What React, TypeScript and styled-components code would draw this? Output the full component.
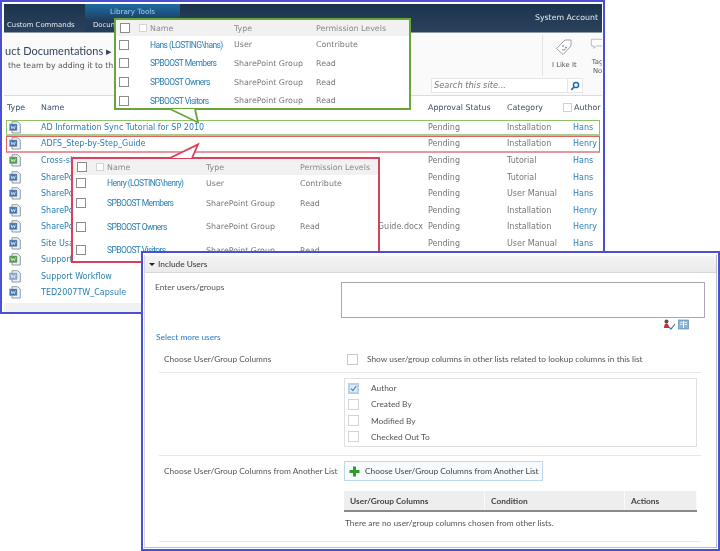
import React from 'react';
import styled, { createGlobalStyle } from 'styled-components';

const GlobalStyle = createGlobalStyle`
	html, body {
		margin: 0;
		padding: 0;
		background: #fff;
	}
`;

const Canvas = styled.div`
	position: relative;
	width: 720px;
	height: 551px;
	overflow: hidden;
	background: #fff;
	font-family: 'DejaVu Sans', Verdana, sans-serif;
	filter: blur(0.4px);
`;

const BackWindow = styled.div`
	position: absolute;
	left: 0;
	top: 0;
	width: 605px;
	height: 314px;
	box-sizing: border-box;
	border: 2px solid #4a50d6;
	padding: 2px 1px 0 2px;
	background: #fff;
	display: flex;
	flex-direction: column;
	overflow: hidden;
`;

const TopBar = styled.div`
	height: 28px;
	flex: none;
	display: flex;
	background: linear-gradient(#1c334e, #2b425c);
	border-bottom: 1px solid #8d9aa6;
	color: #e6ecf2;
	font-size: 7.6px;
`;

const BarCommand = styled.div`
	align-self: flex-end;
	width: 81px;
	padding: 0 0 3px 3px;
	box-sizing: border-box;
	font-size: 6.9px;
	white-space: nowrap;
`;

const ToolsTab = styled.div`
	width: 95px;
	display: flex;
	flex-direction: column;
	justify-content: space-between;
	background: linear-gradient(#1e6ba3, #1d5582 30%, #223c5a 60%);
`;

const ToolsLabel = styled.div`
	text-align: center;
	color: #a9cfe8;
	font-size: 7.2px;
	padding-top: 3px;
`;

const ToolsItem = styled.div`
	padding: 0 0 3px 8px;
	font-size: 6.9px;
`;

const Account = styled.div`
	margin-left: auto;
	padding: 9px 4px 0 0;
	font-size: 7.8px;
`;

const TitleBand = styled.div`
	height: 45px;
	flex: none;
	display: flex;
	justify-content: space-between;
	background: #fafafa;
`;

const TitleBlock = styled.div`
	padding: 10px 0 0 1px;
`;

const PageTitle = styled.div`
	font-family: 'Lato', 'Open Sans', sans-serif;
	font-size: 11px;
	color: #33465c;
	line-height: 15px;
	white-space: nowrap;
`;

const PageHint = styled.div`
	font-size: 7.8px;
	color: #555;
	line-height: 16px;
	padding-left: 3px;
`;

const Social = styled.div`
	width: 60px;
	margin: 2px 0;
	border-left: 1px solid #e4e4e4;
	display: flex;
	gap: 12px;
	padding-left: 9px;
	box-sizing: border-box;
	overflow: hidden;
`;

const SocialItem = styled.div`
	flex: none;
	display: flex;
	flex-direction: column;
	align-items: center;
	font-size: 6.8px;
	line-height: 9px;
	color: #555;
	text-align: center;
	gap: 5px;
	padding-top: 3px;
`;

const SearchRow = styled.div`
	height: 17px;
	flex: none;
	display: flex;
	justify-content: flex-end;
	padding-right: 19px;
	background: #fafafa;
	border-bottom: 1px solid #dcdcdc;
`;

const SearchBox = styled.div`
	width: 137px;
	height: 15px;
	box-sizing: border-box;
	border: 1px solid #e6e6e6;
	background: #fff;
	font-size: 8.3px;
	font-style: italic;
	color: #777;
	padding-left: 2px;
	line-height: 13px;
`;

const SearchButton = styled.div`
	width: 15px;
	height: 15px;
	box-sizing: border-box;
	border: 1px solid #e6e6e6;
	border-left: 0;
	background: #fff;
	display: flex;
	align-items: center;
	justify-content: center;
`;

const listColumns = '34px 387px 79px 66px 1fr';

const ListHead = styled.div`
	height: 23.5px;
	flex: none;
	display: grid;
	grid-template-columns: ${listColumns};
	align-items: center;
	padding: 0 3px;
	font-size: 7.9px;
	color: #3a5068;
`;

const AuthorHead = styled.div`
	display: flex;
	align-items: center;
	gap: 2px;
	margin-left: -10px;
`;

const markLine = { green: '#8fc06a', red: '#e0606a' };
const markBase = { green: '#a6cf88', red: '#e6989c' };

const ListRow = styled.div<{ $mark?: 'green' | 'red' }>`
	height: 16.5px;
	flex: none;
	box-sizing: border-box;
	display: grid;
	grid-template-columns: ${listColumns};
	align-items: center;
	margin: 0 2px;
	font-size: 8px;
	color: #777;
	border: 1px solid ${p => (p.$mark ? markLine[p.$mark] : 'transparent')};
	border-bottom-color: ${p => (p.$mark ? markBase[p.$mark] : 'transparent')};
	border-bottom-width: ${p => (p.$mark ? '2px' : '1px')};
`;

const FileCell = styled.div`
	display: flex;
	padding-left: 2px;
`;

const NameCell = styled.div`
	display: flex;
	justify-content: space-between;
	padding-right: 5px;
	white-space: nowrap;
`;

const NameLink = styled.span`
	color: #2a7fb4;
	white-space: nowrap;
`;

const ListFoot = styled.div`
	flex: 1;
	margin-top: 2px;
	background: #f1f1f1;
`;

const Popup = styled.div<{ $x: number; $y: number; $w: number; $h: number; $line: string }>`
	position: absolute;
	left: ${p => p.$x}px;
	top: ${p => p.$y}px;
	width: ${p => p.$w}px;
	height: ${p => p.$h}px;
	box-sizing: border-box;
	border: 2px solid ${p => p.$line};
	background: #fff;
	font-size: 7.9px;
	color: #777;
`;

const PopupHead = styled.div<{ $cols: string }>`
	height: 16px;
	display: grid;
	grid-template-columns: ${p => p.$cols};
	align-items: center;
	background: #f1f1f1;
	color: #8a8a8a;
`;

const PopupRow = styled.div<{ $cols: string; $h: number }>`
	height: ${p => p.$h}px;
	display: grid;
	grid-template-columns: ${p => p.$cols};
	align-items: center;
`;

const BoxCell = styled.div`
	display: flex;
	align-items: center;
	gap: 9px;
	padding-left: 3px;
`;

const HeadBoxCell = styled(BoxCell)`
	padding-left: 4px;
`;

const PersonLink = styled.span`
	font-family: 'Roboto', 'Liberation Sans', sans-serif;
	font-size: 8.5px;
	color: #2a7fb4;
	white-space: nowrap;
	letter-spacing: -0.6px;
`;

const Tick = styled.span<{ $size?: number; $tone?: string }>`
	display: inline-flex;
	align-items: center;
	justify-content: center;
	flex: none;
	box-sizing: border-box;
	width: ${p => p.$size ?? 10}px;
	height: ${p => p.$size ?? 10}px;
	border: 1px solid ${p => p.$tone ?? '#8c8c8c'};
	background: #fff;
`;

const Tail = styled.svg`
	position: absolute;
	overflow: visible;
`;

const FrontWindow = styled.div`
	position: absolute;
	left: 141px;
	top: 251px;
	width: 579px;
	height: 300px;
	box-sizing: border-box;
	border: 2px solid #4a50d6;
	background: #fff;
	padding: 2px 1px 1px 1px;
	font-family: 'Lato', 'Open Sans', sans-serif;
	font-size: 8.35px;
	color: #555;
`;

const FrontInner = styled.div`
	height: 100%;
	box-sizing: border-box;
	border-right: 1px solid #b9bdc4;
	border-bottom: 1px solid #b9bdc4;
	border-left: 1px solid #d4d6da;
	display: flex;
	flex-direction: column;
`;

const SectionHead = styled.div`
	height: 16px;
	flex: none;
	margin-top: 1px;
	display: flex;
	align-items: center;
	gap: 3px;
	padding-left: 4px;
	background: linear-gradient(#f3f3f3, #ebebeb);
	border-bottom: 1px solid #d8d8d8;
	color: #333;
	font-size: 8.35px;
`;

const Caret = styled.span`
	width: 0;
	height: 0;
	border-left: 3px solid transparent;
	border-right: 3px solid transparent;
	border-top: 3.5px solid #222;
`;

const FormBody = styled.div`
	padding: 9px 15px 0 10px;
	display: flex;
	flex-direction: column;
`;

const EntryRow = styled.div`
	display: grid;
	grid-template-columns: 186px 364px;
`;

const EntryLabel = styled.div`
	line-height: 10px;
`;

const EntryBox = styled.div`
	height: 36px;
	box-sizing: border-box;
	border: 1px solid #a9a9a9;
`;

const CheckNames = styled.div`
	display: flex;
	justify-content: flex-end;
	align-items: center;
	gap: 2px;
	height: 12px;
	padding-right: 12px;

	& > svg {
		flex: none;
	}
`;

const MoreLink = styled.div`
	color: #2b79c2;
	line-height: 11px;
	padding-left: 1px;
	margin-top: 2px;
`;

const OptionRow = styled.div<{ $line?: boolean; $h: number; $top?: number }>`
	display: grid;
	box-sizing: border-box;
	grid-template-columns: 180px 1fr;
	align-items: center;
	height: ${p => p.$h}px;
	margin-left: 4px;
	border-bottom: ${p => (p.$line ? '1px solid #e8e8e8' : '0')};
	padding: ${p => p.$top ?? 0}px 0 0 5px;
	white-space: nowrap;
`;

const ShowUsers = styled.div`
	display: flex;
	align-items: center;
	gap: 9px;
	padding-left: 3px;
`;

const ColumnBox = styled.div`
	width: 353px;
	box-sizing: border-box;
	height: 69px;
	margin-bottom: 3px;
	border: 1px solid #e0e0e0;
	padding: 1px 3px;
	display: flex;
	flex-direction: column;
`;

const ColumnItem = styled.div`
	flex: 1;
	display: flex;
	align-items: center;
	gap: 12px;
`;

const AddButton = styled.div`
	width: 199px;
	height: 20px;
	box-sizing: border-box;
	border: 1px solid #bcd8ea;
	background: #f8fbfd;
	display: flex;
	align-items: center;
	gap: 5px;
	padding-left: 4px;
	color: #444;

	& > svg {
		flex: none;
	}
`;

const TableWrap = styled.div`
	margin: 5px 0 0 189px;
	width: 353px;
`;

const TableHead = styled.div`
	height: 21px;
	box-sizing: border-box;
	display: grid;
	grid-template-columns: 141px 140px 1fr;
	background: #eeeeee;
	border-bottom: 2px solid #8a8a8a;
	font-weight: 700;
	color: #444;
`;

const HeadCell = styled.div`
	display: flex;
	align-items: center;
	padding-left: 6px;
	border-right: 1px solid #fafafa;
`;

const EmptyNote = styled.div`
	padding: 6px 0 0 1px;
	height: 23px;
	box-sizing: border-box;
	line-height: 11px;
`;

const EndRule = styled.div`
	margin: 6px 0 0 4px;
	border-top: 1px solid #e8e8e8;
`;

const DocIcon = ({ kind = 'word' }: { kind?: 'word' | 'excel' | 'flow' }) => {
	const tone = kind === 'excel' ? '#4f9a44' : kind === 'flow' ? '#8aa8cc' : '#3f72b0';
	return (
		<svg width='12' height='13' viewBox='0 0 12 13'>
			<path d='M3 .7h5.500l2.800 2.300v9H3z' fill='#eef2f6' stroke='#74838f' strokeWidth='.8' />
			<rect x='.6' y='3' width='7.400' height='6.500' fill={tone} stroke='#8a99aa' strokeWidth='.5' />
			<path d='M2 4.600l1 3.200 1.200-2.400 1.200 2.400 1-3.200' fill='none' stroke='#fff' strokeWidth='.7' />
		</svg>
	);
};

const TagIcon = () => (
	<svg width='18' height='18' viewBox='0 0 18 18'>
		<path
			d='M1.500 10.500 10 2h6v6l-8 8.500z'
			fill='#fdfdfd'
			stroke='#9aa3ad'
			strokeWidth='1'
			strokeLinejoin='round'
		/>
		<circle cx='8' cy='8' r='.8' fill='#5b6b7a' />
		<circle cx='11' cy='9.500' r='.8' fill='#5b6b7a' />
		<path d='M7 11.500c1.500 1 3 .5 4-1' fill='none' stroke='#5b6b7a' strokeWidth='.8' />
	</svg>
);

const NoteIcon = () => (
	<svg width='18' height='18' viewBox='0 0 18 18'>
		<path d='M1 1.500h14v8H7l-3 3v-3H1z' fill='#fdfdfd' stroke='#aab2ba' strokeWidth='1' />
	</svg>
);

const SearchGlyph = () => (
	<svg width='10' height='10' viewBox='0 0 10 10'>
		<circle cx='6' cy='4' r='2.600' fill='none' stroke='#1f6db0' strokeWidth='1.500' />
		<path d='M4 6 1.300 8.800' stroke='#1f6db0' strokeWidth='1.800' />
	</svg>
);

const CheckMark = () => (
	<svg width='11' height='11' viewBox='0 0 11 11'>
		<rect x='0' y='0' width='11' height='11' fill='#b9d0e6' />
		<rect x='2' y='2' width='7' height='7' fill='#dfeaf5' />
		<path d='M3 5.500 5 7.600 8.200 3' fill='none' stroke='#4e86bf' strokeWidth='1.200' />
	</svg>
);

const PlusGlyph = () => (
	<svg width='11' height='11' viewBox='0 0 11 11'>
		<path d='M4 .5h3V4h3.500v3H7v3.500H4V7H.5V4H4z' fill='#2e9e2a' />
	</svg>
);

const CheckNamesGlyph = () => (
	<svg width='13' height='11' viewBox='0 0 13 11'>
		<circle cx='3.500' cy='2.500' r='2' fill='#5a4a4a' />
		<path d='M1 9c0-3 1-4.500 2.500-4.500S6 6 6 9z' fill='#c2303a' />
		<path d='M6 8l2 2 4-5' fill='none' stroke='#3b7fc4' strokeWidth='1.200' />
	</svg>
);

const BookGlyph = () => (
	<svg width='11' height='11' viewBox='0 0 11 11'>
		<rect x='.5' y='1' width='10' height='9' fill='#8fb6da' stroke='#4f7ea8' strokeWidth='.6' />
		<path d='M5.500 2v7' stroke='#fff' strokeWidth='1' />
		<path d='M2 3.500h2.500M2 5.500h2.500M6.500 3.500H9M6.500 5.500H9' stroke='#fff' strokeWidth='.7' />
	</svg>
);

type FileRow = {
	name: string;
	kind?: 'word' | 'excel' | 'flow';
	trail?: string;
	category: string;
	author: string;
	mark?: 'green' | 'red';
};

const files: FileRow[] = [
	{ name: 'AD Information Sync Tutorial for SP 2010', category: 'Installation', author: 'Hans', mark: 'green' },
	{ name: 'ADFS_Step-by-Step_Guide', category: 'Installation', author: 'Henry', mark: 'red' },
	{ name: 'Cross-site', kind: 'excel', category: 'Tutorial', author: 'Hans' },
	{ name: 'SharePoint', category: 'Tutorial', author: 'Hans' },
	{ name: 'SharePoint', category: 'User Manual', author: 'Hans' },
	{ name: 'SharePoint', category: 'Installation', author: 'Henry' },
	{ name: 'SharePoint', trail: 'Guide.docx', category: 'Installation', author: 'Henry' },
	{ name: 'Site Usage', category: 'User Manual', author: 'Hans' },
	{ name: 'Support', kind: 'excel', category: '', author: '' },
	{ name: 'Support Workflow', kind: 'flow', category: '', author: '' },
	{ name: 'TED2007TW_Capsule', category: '', author: '' },
];

const greenCols = '34px 84px 82px 1fr';
const redCols = '34px 99px 94px 1fr';

const greenPeople = [
	{ name: 'Hans (LOSTING\\hans)', type: 'User', level: 'Contribute', h: 17 },
	{ name: 'SPBOOST Members', type: 'SharePoint Group', level: 'Read', h: 20 },
	{ name: 'SPBOOST Owners', type: 'SharePoint Group', level: 'Read', h: 18 },
	{ name: 'SPBOOST Visitors', type: 'SharePoint Group', level: 'Read', h: 19 },
];

const redPeople = [
	{ name: 'Henry (LOSTING\\henry)', type: 'User', level: 'Contribute', h: 16 },
	{ name: 'SPBOOST Members', type: 'SharePoint Group', level: 'Read', h: 24 },
	{ name: 'SPBOOST Owners', type: 'SharePoint Group', level: 'Read', h: 23 },
	{ name: 'SPBOOST Visitors', type: 'SharePoint Group', level: 'Read', h: 24 },
];

const columnsList = [
	{ label: 'Author', on: true },
	{ label: 'Created By', on: false },
	{ label: 'Modified By', on: false },
	{ label: 'Checked Out To', on: false },
];

const App: React.FC = () => {
	return (
		<Canvas>
			<GlobalStyle />
			<BackWindow>
				<TopBar>
					<BarCommand>Custom Commands</BarCommand>
					<ToolsTab>
						<ToolsLabel>Library Tools</ToolsLabel>
						<ToolsItem>Documents</ToolsItem>
					</ToolsTab>
					<Account>System Account</Account>
				</TopBar>
				<TitleBand>
					<TitleBlock>
						<PageTitle>uct Documentations ▸</PageTitle>
						<PageHint>the team by adding it to th</PageHint>
					</TitleBlock>
					<Social>
						<SocialItem>
							<TagIcon />
							<span>I Like It</span>
						</SocialItem>
						<SocialItem>
							<NoteIcon />
							<span>
								Tag
								<br />
								No
							</span>
						</SocialItem>
					</Social>
				</TitleBand>
				<SearchRow>
					<SearchBox>Search this site...</SearchBox>
					<SearchButton>
						<SearchGlyph />
					</SearchButton>
				</SearchRow>
				<ListHead>
					<span>Type</span>
					<span>Name</span>
					<span>Approval Status</span>
					<span>Category</span>
					<AuthorHead>
						<Tick $size={9} $tone='#d0d0d0' />
						Author
					</AuthorHead>
				</ListHead>
				{files.map((file, i) => (
					<ListRow key={i} $mark={file.mark}>
						<FileCell>
							<DocIcon kind={file.kind} />
						</FileCell>
						<NameCell>
							<NameLink>{file.name}</NameLink>
							{file.trail && <span>{file.trail}</span>}
						</NameCell>
						<span>Pending</span>
						<span>{file.category}</span>
						<NameLink>{file.author}</NameLink>
					</ListRow>
				))}
				<ListFoot />
			</BackWindow>

			<Popup $x={71} $y={157} $w={309} $h={106} $line='#d8405c'>
				<PopupHead $cols={redCols}>
					<HeadBoxCell>
						<Tick $size={10} />
						<Tick $size={8} $tone='#d4d4d4' />
					</HeadBoxCell>
					<span>Name</span>
					<span>Type</span>
					<span>Permission Levels</span>
				</PopupHead>
				{redPeople.map(person => (
					<PopupRow key={person.name} $cols={redCols} $h={person.h}>
						<BoxCell>
							<Tick $size={10} />
						</BoxCell>
						<PersonLink>{person.name}</PersonLink>
						<span>{person.type}</span>
						<span>{person.level}</span>
					</PopupRow>
				))}
			</Popup>
			<Tail style={{ left: 168, top: 143 }} width='32' height='17' viewBox='0 0 32 17'>
				<path d='M2 15 30 1.500 24 15' fill='#fff' stroke='#d8405c' strokeWidth='1.800' />
			</Tail>

			<Popup $x={114} $y={18} $w={297} $h={92} $line='#69a63a'>
				<PopupHead $cols={greenCols}>
					<HeadBoxCell>
						<Tick $size={10} />
						<Tick $size={8} $tone='#d4d4d4' />
					</HeadBoxCell>
					<span>Name</span>
					<span>Type</span>
					<span>Permission Levels</span>
				</PopupHead>
				{greenPeople.map(person => (
					<PopupRow key={person.name} $cols={greenCols} $h={person.h}>
						<BoxCell>
							<Tick $size={10} />
						</BoxCell>
						<PersonLink>{person.name}</PersonLink>
						<span>{person.type}</span>
						<span>{person.level}</span>
					</PopupRow>
				))}
			</Popup>
			<Tail style={{ left: 168, top: 107 }} width='32' height='17' viewBox='0 0 32 17'>
				<path d='M2 2 30 15.500 27 2' fill='#fff' stroke='#69a63a' strokeWidth='1.800' />
			</Tail>

			<FrontWindow>
				<FrontInner>
					<SectionHead>
						<Caret />
						Include Users
					</SectionHead>
					<FormBody>
						<EntryRow>
							<EntryLabel>Enter users/groups</EntryLabel>
							<EntryBox />
						</EntryRow>
						<CheckNames>
							<CheckNamesGlyph />
							<BookGlyph />
						</CheckNames>
						<MoreLink>Select more users</MoreLink>
						<OptionRow $h={30} $line $top={3}>
							<span>Choose User/Group Columns</span>
							<ShowUsers>
								<Tick $size={11} $tone='#c9c9c9' />
								Show user/group columns in other lists related to lookup columns in this list
							</ShowUsers>
						</OptionRow>
						<OptionRow $h={83} $line>
							<span />
							<ColumnBox>
								{columnsList.map(col => (
									<ColumnItem key={col.label}>
										{col.on ? <CheckMark /> : <Tick $size={11} $tone='#cfd6dd' />}
										{col.label}
									</ColumnItem>
								))}
							</ColumnBox>
						</OptionRow>
						<OptionRow $h={30}>
							<span>Choose User/Group Columns from Another List</span>
							<AddButton>
								<PlusGlyph />
								Choose User/Group Columns from Another List
							</AddButton>
						</OptionRow>
						<TableWrap>
							<TableHead>
								<HeadCell>User/Group Columns</HeadCell>
								<HeadCell>Condition</HeadCell>
								<HeadCell>Actions</HeadCell>
							</TableHead>
							<EmptyNote>There are no user/group columns chosen from other lists.</EmptyNote>
						</TableWrap>
						<EndRule />
					</FormBody>
				</FrontInner>
			</FrontWindow>
		</Canvas>
	);
};

export default App;
